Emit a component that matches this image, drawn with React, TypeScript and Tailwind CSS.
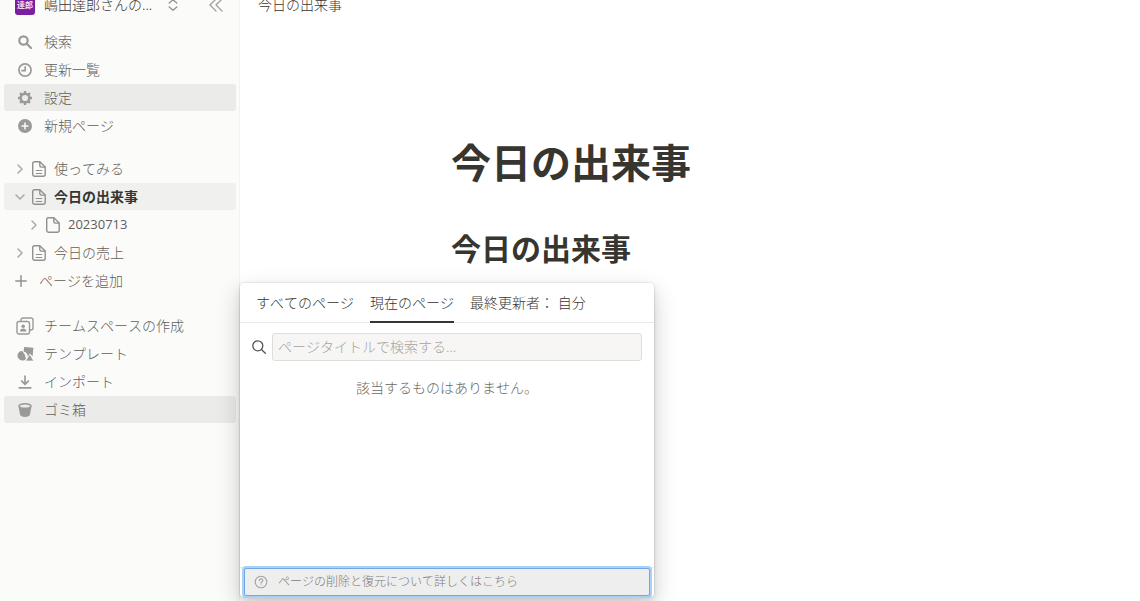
import React, { useState } from 'react';

const iconProps = {
  fill: 'none',
  stroke: 'currentColor',
  strokeLinecap: 'round' as const,
  strokeLinejoin: 'round' as const,
  'aria-hidden': true,
};

function SearchIcon() {
  return (
    <svg className="h-3.5 w-3.5" viewBox="0 0 14 14" {...iconProps} strokeWidth={2.2}>
      <circle cx="5.5" cy="5.5" r="4.2" />
      <path d="M8.8 8.8 13 13" />
    </svg>
  );
}

function ClockIcon() {
  return (
    <svg className="h-3.5 w-3.5" viewBox="0 0 14 14" {...iconProps} strokeWidth={1.7}>
      <circle cx="7" cy="7" r="6.1" />
      <path d="M7.200 3.800V7.700H4" />
    </svg>
  );
}

function GearIcon() {
  return (
    <svg className="h-3.5 w-3.5" viewBox="0 0 14 14" fill="none" stroke="currentColor" aria-hidden>
      <circle cx="7" cy="7" r="4.300" strokeWidth="2.400" />
      <path
        strokeWidth="2.400"
        d="M7 0v2.600M7 11.400V14M0 7h2.600M11.400 7H14M2.050 2.050l1.800 1.800M10.150 10.150l1.800 1.800M2.050 11.950l1.800-1.800M10.150 3.850l1.800-1.800"
      />
    </svg>
  );
}

function NewPageIcon() {
  return (
    <svg className="h-3.5 w-3.5" viewBox="0 0 14 14" aria-hidden>
      <circle cx="7" cy="7" r="7" fill="currentColor" />
      <path d="M7 4v6M4 7h6" stroke="#fbfbfa" strokeWidth="1.500" strokeLinecap="round" />
    </svg>
  );
}

function PageIcon({ lines }: { lines?: boolean }) {
  return (
    <svg className="h-4 w-3.5 text-[#91918e]" viewBox="0 0 14 16" {...iconProps} strokeWidth={1.4}>
      <path d="M2.6.7h5.2l5.4 5.4v7.2a2 2 0 0 1-2 2H2.7a2 2 0 0 1-2-2V2.6A1.9 1.9 0 0 1 2.6.7Z" />
      <path d="M7.8.9v3.7a1.5 1.5 0 0 0 1.5 1.5H13" />
      {lines && <path strokeWidth="1.2" d="M4.300 9.500h5.400M4.300 12.500h5.400" />}
    </svg>
  );
}

function Chevron({ open }: { open?: boolean }) {
  return (
    <svg className="h-2.5 w-2.5 text-[#a9a9a6]" viewBox="0 0 10 10" {...iconProps} strokeWidth={1.5}>
      <path d={open ? 'M1 3l4 4 4-4' : 'M3 1l4 4-4 4'} />
    </svg>
  );
}

function PlusIcon() {
  return (
    <svg className="h-3 w-3" viewBox="0 0 12 12" {...iconProps} strokeWidth={1.5}>
      <path d="M6 .8v10.4M.8 6h10.4" />
    </svg>
  );
}

function TeamspaceIcon() {
  return (
    <svg className="h-[18px] w-[18px]" viewBox="0 0 18 18" {...iconProps} strokeWidth={1.4}>
      <path d="M5 4V3a2 2 0 0 1 2-2h8a2 2 0 0 1 2 2v8a2 2 0 0 1-2 2h-1" />
      <rect x="1" y="4.5" width="12.5" height="12.5" rx="2" />
      <circle cx="7.2" cy="9.2" r="1.8" fill="currentColor" stroke="none" />
      <path d="M4 14.4c0-3.8 6.4-3.8 6.4 0Z" fill="currentColor" stroke="none" />
    </svg>
  );
}

function TemplateIcon() {
  return (
    <svg className="h-4 w-[18px]" viewBox="0 0 18 16" fill="currentColor" aria-hidden>
      <path d="m8.1 1 9.3.8-.8 8.8-2.6-3.2-2.3 3.6A5.4 5.4 0 0 0 7.6 5.5Z" />
      <path d="M6 4.800A4.9 4.9 0 1 0 10 13L8.8 8.5 6 4.800Z" />
      <path d="m13.800 8.200 3.800 6.700H9.700Z" stroke="#fbfbfa" strokeWidth=".6" />
    </svg>
  );
}

function ImportIcon() {
  return (
    <svg className="h-3.5 w-3.5" viewBox="0 0 14 14" fill="none" stroke="currentColor" strokeWidth="1.7" aria-hidden>
      <path d="M7 .5v8.8M3.2 5.7 7 9.4l3.8-3.7M.6 12.9h12.8" />
    </svg>
  );
}

function TrashIcon() {
  return (
    <svg className="h-3.5 w-3.5" viewBox="0 0 14 14" aria-hidden>
      <path d="M.4 2.7 2 11.6C2.3 13.2 4.3 14 7 14s4.700-.8 5-2.400l1.600-8.900Z" fill="currentColor" />
      <ellipse cx="7" cy="2.800" rx="6.600" ry="2.800" fill="currentColor" />
      <ellipse cx="7" cy="3" rx="4.900" ry="1.500" fill="#ebebea" />
    </svg>
  );
}

type ItemProps = { icon: React.ReactNode; label: string; className?: string };

function MenuItem({ icon, label, className = '' }: ItemProps) {
  return (
    <button className={`flex h-[27px] items-center gap-2 rounded-[3px] pl-2.5 text-left ${className}`}>
      <span className="flex w-[22px] justify-center text-[#9b9a97]">{icon}</span>
      {label}
    </button>
  );
}

type PageProps = { label: string; lines?: boolean; open?: boolean; className?: string };

function PageItem({ label, lines, open, className = 'pl-[11px]' }: PageProps) {
  return (
    <button className={`flex h-[27px] items-center rounded-[3px] text-left ${className}`}>
      <Chevron open={open} />
      <span className="mr-2 ml-[7px]">
        <PageIcon lines={lines} />
      </span>
      {label}
    </button>
  );
}

function Sidebar() {
  return (
    <aside className="flex w-60 shrink-0 flex-col border-r border-[#f3f3f2] bg-[#fbfbfa] text-[#5f5e5b]">
      {/* Workspace switcher */}
      <div className="-mt-[17px] flex h-11 items-center pr-4 pl-[15px]">
        <button className="flex items-center text-[#37352f]">
          <span className="flex h-5 w-5 items-center justify-center rounded-[3px] bg-[#7b1fa2] text-[8px] font-medium text-white">
            達郎
          </span>
          <span className="ml-[9px]">嶋田達郎さんの...</span>
          <svg className="ml-4 h-3 w-2.5 text-[#91918e]" viewBox="0 0 10 12" {...iconProps} strokeWidth={1.3}>
            <path d="M1.200 4 5 .8 8.800 4M1.200 8 5 11.200 8.800 8" />
          </svg>
        </button>
        <button className="ml-auto text-[#a3a29f]" aria-label="サイドバーを閉じる">
          <svg className="h-3.5 w-3.5" viewBox="0 0 14 14" {...iconProps} strokeWidth={1.4}>
            <path d="M7 1 1 7l6 6M13 1 7 7l6 6" />
          </svg>
        </button>
      </div>

      <nav className="flex flex-col gap-px px-1 pt-px pr-[3px]">
        <MenuItem icon={<SearchIcon />} label="検索" />
        <MenuItem icon={<ClockIcon />} label="更新一覧" />
        <MenuItem icon={<GearIcon />} label="設定" className="bg-[#ebebea]" />
        <MenuItem icon={<NewPageIcon />} label="新規ページ" />
      </nav>

      <nav className="mt-4 flex flex-col gap-px pr-[3px] pl-1">
        <PageItem label="使ってみる" lines />
        <PageItem label="今日の出来事" lines open className="bg-[#f0f0ef] pl-[11px] font-bold text-[#37352f]" />
        <PageItem label="20230713" className="pl-[25px] font-['Open_Sans',sans-serif] text-[13px] font-medium" />
        <PageItem label="今日の売上" lines />
        <button className="flex h-[27px] items-center gap-3 pl-[11px] text-left">
          <span className="text-[#91918e]">
            <PlusIcon />
          </span>
          ページを追加
        </button>
      </nav>

      <nav className="mt-[18px] flex flex-col gap-px pr-[3px] pl-1">
        <MenuItem icon={<TeamspaceIcon />} label="チームスペースの作成" />
        <MenuItem icon={<TemplateIcon />} label="テンプレート" />
        <MenuItem icon={<ImportIcon />} label="インポート" />
        <MenuItem icon={<TrashIcon />} label="ゴミ箱" className="bg-[#ebebea]" />
      </nav>
    </aside>
  );
}

const tabs = ['すべてのページ', '現在のページ', '最終更新者： 自分'];

function TrashPopover() {
  const [active, setActive] = useState(1);
  const [query, setQuery] = useState('');

  return (
    <section className="absolute top-[283px] left-60 flex h-[314px] w-[414px] flex-col rounded-[4px] bg-white text-[#37352f] shadow-[0_0_0_1px_rgba(15,15,15,0.06),0_3px_6px_rgba(15,15,15,0.1),0_9px_24px_rgba(15,15,15,0.2)]">
      <div className="flex h-10 gap-4 border-b border-[#e9e9e8] px-4">
        {tabs.map((tab, i) => (
          <button
            key={tab}
            onClick={() => setActive(i)}
            className={`-mb-px border-b-2 pt-0.5 ${i === active ? 'border-[#37352f]' : 'border-transparent'}`}
          >
            {tab}
          </button>
        ))}
      </div>

      <label className="flex items-center gap-1.5 py-2.5 pr-3 pl-3">
        <svg className="h-3.5 w-3.5 shrink-0 text-[#55534e]" viewBox="0 0 14 14" {...iconProps} strokeWidth={1.3}>
          <circle cx="5.800" cy="5.800" r="5" />
          <path d="m9.500 9.500 3.800 3.800" />
        </svg>
        <input
          type="text"
          value={query}
          onChange={(e) => setQuery(e.target.value)}
          aria-label="ページタイトルで検索する"
          placeholder="ページタイトルで検索する..."
          className="h-7 min-w-0 flex-1 rounded-[3px] border border-[#dededc] bg-[#f7f6f5] px-[5px] pb-0.5 font-light outline-none placeholder:text-[#a5a4a1]"
        />
      </label>

      <p className="mt-[7px] text-center text-[#6b6a66]">該当するものはありません。</p>

      <div className="mt-auto border-t border-[#ededec] px-1 pb-px">
        <a
          href="#help"
          className="flex h-7 items-center gap-2.5 rounded-[2px] border border-[#6fa8e6] bg-[#eeeeee] pl-[9px] text-xs text-[#7c7b78] ring-2 ring-[#a9d0f5]"
        >
          <svg className="h-3.5 w-3.5 text-[#a3a29f]" viewBox="0 0 14 14" {...iconProps} strokeWidth={1.1}>
            <circle cx="7" cy="7" r="5.800" />
            <path d="M5.300 5.600c0-2.300 3.500-2.200 3.500-.1C8.800 6.800 7 6.800 7 8.200M7 10v.1" />
          </svg>
          ページの削除と復元について詳しくはこちら
        </a>
      </div>
    </section>
  );
}

export default function App() {
  return (
    <div className="relative flex h-screen overflow-hidden bg-white font-['Noto_Sans','Noto_Sans_CJK_JP',sans-serif] text-sm font-light text-[#37352f] [font-kerning:none]">
      <Sidebar />
      <main className="min-w-0 flex-1">
        <header className="-mt-[17px] flex h-11 items-center px-[18px]">
          <a href="#page">今日の出来事</a>
        </header>
        <article className="pt-[106px] pr-8 pl-[211px]">
          <h1 className="text-[40px] leading-[60px] font-bold">今日の出来事</h1>
          <h2 className="mt-8 text-3xl leading-[48px] font-bold">今日の出来事</h2>
        </article>
      </main>
      <TrashPopover />
    </div>
  );
}
